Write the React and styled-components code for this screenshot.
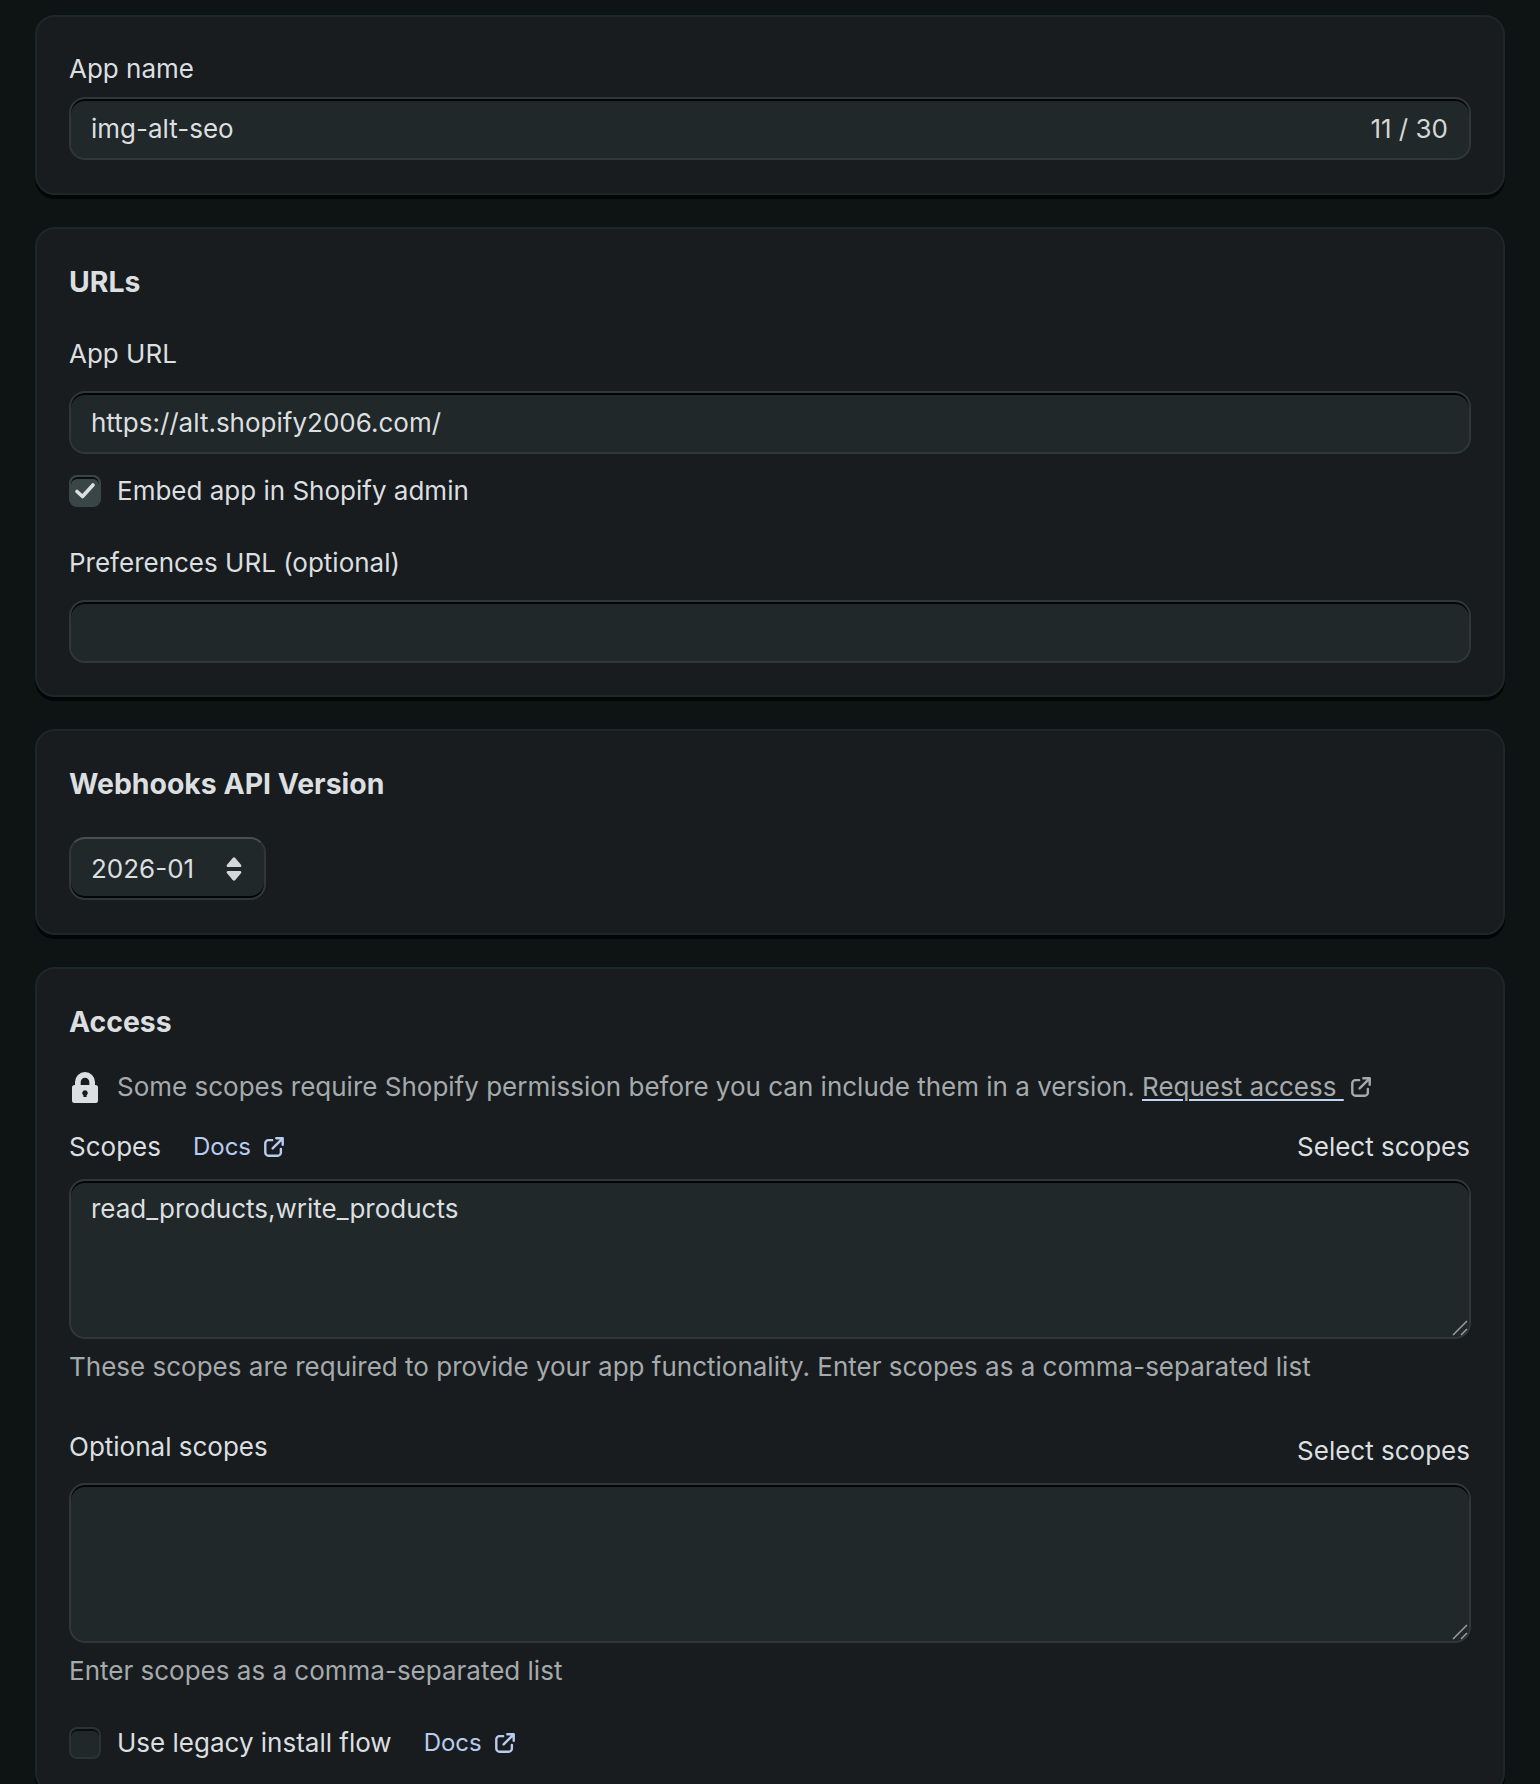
import styled, { createGlobalStyle } from "styled-components";

const GlobalStyle = createGlobalStyle`
  html, body {
    margin: 0;
    height: 1784px;
    overflow: hidden;
    background: #0e1313;
  }
  #root {
    height: 1784px;
    overflow: hidden;
  }
`;

const Page = styled.div`
  display: flex;
  flex-direction: column;
  gap: 32px;
  padding: 15px 35px 0;
  font-family: Inter, "Liberation Sans", sans-serif;
  font-size: 26px;
  line-height: 32px;
  color: #dcdfe0;
`;

const Card = styled.section`
  display: flex;
  flex-direction: column;
  padding: ${(p) => p.$pt || "33px"} 32px ${(p) => p.$pb || "32px"};
  background: #181c1f;
  border: 2px solid #1c2729;
  border-radius: 20px;
  box-shadow: 0 4px 0 #040606;
`;

const Heading = styled.h2`
  margin: 0 0 ${(p) => p.$mb || "0"};
  font-size: 28.4px;
  line-height: 40px;
  font-weight: 700;
  color: #dcdfe0;
`;

const Label = styled.label`
  display: block;
  margin-bottom: ${(p) => p.$mb || "12px"};
  line-height: 32px;
`;

const Field = styled.div`
  display: flex;
  align-items: center;
  justify-content: space-between;
  box-sizing: border-box;
  height: 63px;
  padding: 0 21px 0 20px;
  background: #212829;
  border: 2px solid #2f3739;
  border-radius: 16px;
  box-shadow: inset 0 2px 0 #040606;
`;

const Counter = styled.span`
  color: #d4d6d7;
`;

const CheckRow = styled.div`
  display: flex;
  align-items: center;
  gap: 16px;
  margin-top: ${(p) => p.$mt || "21px"};
  margin-bottom: ${(p) => p.$mb || "40px"};
`;

const CheckBox = styled.span`
  display: flex;
  align-items: center;
  justify-content: center;
  flex: none;
  box-sizing: border-box;
  width: 32px;
  height: 32px;
  border-radius: 8px;
  background: ${(p) => (p.$checked ? "#3a4547" : "#212829")};
  border: 2px solid ${(p) => (p.$checked ? "#3a4547" : "#2b3335")};
  box-shadow: inset 0 2px 0 #0a0d0e;
  color: #dcdfe0;
`;

const Select = styled.div`
  display: flex;
  align-items: center;
  justify-content: space-between;
  box-sizing: border-box;
  width: 197px;
  height: 63px;
  margin-top: 33px;
  padding: 0 22px 0 20px;
  background: #212829;
  border: 2px solid #2f3739;
  border-top-color: #465052;
  border-radius: 16px;
  box-shadow: inset 0 -2px 0 #040606;
`;

const Notice = styled.div`
  display: flex;
  align-items: center;
  gap: 16px;
  margin-top: 29px;
  color: #a5aaac;
`;

const LockBox = styled.span`
  display: flex;
  justify-content: center;
  flex: none;
  width: 32px;
`;

const NoticeLink = styled.a`
  color: #a5aaac;
  text-decoration: underline;
  text-decoration-color: #c4d4f5;
  text-underline-offset: 3px;
  text-decoration-thickness: 2px;
  white-space: pre;
`;

const NoticeIcon = styled.span`
  display: inline-flex;
  margin-left: -10px;
`;

const ScopeRow = styled.div`
  display: flex;
  align-items: ${(p) => p.$align || "center"};
  justify-content: space-between;
  margin-top: ${(p) => p.$mt || "0"};
  margin-bottom: 16px;
`;

const ScopeLabel = styled.div`
  display: flex;
  align-items: center;
  gap: 32px;
`;

const DocsLink = styled.a`
  display: inline-flex;
  align-items: center;
  gap: 12px;
  margin-left: ${(p) => p.$ml || "0"};
  font-size: 24px;
  color: #b8cbf0;
`;

const SelectScopes = styled.span`
  margin-right: 1px;
  margin-top: ${(p) => p.$mt || "0"};
`;

const TextBox = styled.div`
  position: relative;
  box-sizing: border-box;
  height: 160px;
  padding: 12px 20px;
  background: #212829;
  border: 2px solid #2f3739;
  border-radius: 16px;
  box-shadow: inset 0 2px 0 #040606;
`;

const Resize = styled.svg`
  position: absolute;
  right: 1px;
  bottom: 1px;
`;

const Help = styled.p`
  margin: 12px 0 0;
  color: #a5aaac;
`;

const ExternalIcon = () => (
  <svg width="22" height="22" viewBox="0 0 24 24" fill="none" stroke="currentColor" strokeWidth="2.6" strokeLinecap="round" strokeLinejoin="round">
    <path d="M10 4.500H6a3.500 3.500 0 0 0-3.500 3.500v10a3.500 3.500 0 0 0 3.500 3.500h10a3.500 3.500 0 0 0 3.500-3.500v-4" />
    <path d="M10.500 13.500 21.500 2.500M14.500 2.500h7v7" />
  </svg>
);

const LockIcon = () => (
  <svg width="26" height="31" viewBox="0 0 26 31">
    <path
      fill="#dcdfe0"
      fillRule="evenodd"
      d="M3 13V10a10 10 0 0 1 20 0v3h.500a2.500 2.500 0 0 1 2.500 2.500v13a2.500 2.500 0 0 1-2.500 2.500h-21A2.500 2.500 0 0 1 0 28.500v-13A2.500 2.500 0 0 1 2.500 13zM8.700 13h8.600v-3a4.300 4.300 0 0 0-8.600 0zM13 18.200a2.800 2.800 0 0 0-1.600 5.100v1.700h3.200v-1.700A2.800 2.800 0 0 0 13 18.200z"
    />
  </svg>
);

const SortIcon = () => (
  <svg width="16" height="24" viewBox="0 0 16 24" fill="#d4d7d9">
    <path d="M6.700 1.100a1.700 1.700 0 0 1 2.600 0l5.700 6.600c.8 1 .2 2.300-1.100 2.300H2.100C.8 10 .2 8.700 1 7.700z" />
    <path d="M6.700 22.900a1.700 1.700 0 0 0 2.600 0l5.700-6.600c.8-1 .2-2.300-1.100-2.300H2.100c-1.300 0-1.900 1.300-1.100 2.300z" />
  </svg>
);

const CheckIcon = () => (
  <svg width="22" height="18" viewBox="0 0 22 18" fill="none" stroke="currentColor" strokeWidth="3.600" strokeLinecap="round" strokeLinejoin="round">
    <path d="M3 9.500l5.500 5L19 3" />
  </svg>
);

const ResizeGrip = () => (
  <Resize width="16" height="16" viewBox="0 0 16 16" stroke="#9a9d9e" strokeWidth="1.500">
    <path d="M1 15 15 1M9 15l6-6" />
  </Resize>
);

const App = () => {
  return (
    <>
      <GlobalStyle />
      <Page>
        <Card $pt="36px" $pb="33px">
          <Label>App name</Label>
          <Field>
            img-alt-seo
            <Counter>11 / 30</Counter>
          </Field>
        </Card>

        <Card>
          <Heading $mb="36px">URLs</Heading>
          <Label $mb="21px">App URL</Label>
          <Field>https://alt.shopify2006.com/</Field>
          <CheckRow>
            <CheckBox $checked>
              <CheckIcon />
            </CheckBox>
            Embed app in Shopify admin
          </CheckRow>
          <Label $mb="21px">Preferences URL (optional)</Label>
          <Field />
        </Card>

        <Card $pb="33px">
          <Heading>Webhooks API Version</Heading>
          <Select>
            2026-01
            <SortIcon />
          </Select>
        </Card>

        <Card>
          <Heading>Access</Heading>
          <Notice>
            <LockBox>
              <LockIcon />
            </LockBox>
            <span>
              Some scopes require Shopify permission before you can include them in a version.{" "}
              <NoticeLink>Request access </NoticeLink>
            </span>
            <NoticeIcon>
              <ExternalIcon />
            </NoticeIcon>
          </Notice>
          <ScopeRow $mt="28px">
            <ScopeLabel>
              Scopes
              <DocsLink>
                Docs
                <ExternalIcon />
              </DocsLink>
            </ScopeLabel>
            <SelectScopes>Select scopes</SelectScopes>
          </ScopeRow>
          <TextBox>
            read_products,write_products
            <ResizeGrip />
          </TextBox>
          <Help>These scopes are required to provide your app functionality. Enter scopes as a comma-separated list</Help>
          <ScopeRow $mt="48px" $align="flex-start">
            <span>Optional scopes</span>
            <SelectScopes $mt="4px">Select scopes</SelectScopes>
          </ScopeRow>
          <TextBox>
            <ResizeGrip />
          </TextBox>
          <Help>Enter scopes as a comma-separated list</Help>
          <CheckRow $mt="40px" $mb="0">
            <CheckBox />
            Use legacy install flow
            <DocsLink $ml="16px">
              Docs
              <ExternalIcon />
            </DocsLink>
          </CheckRow>
        </Card>
      </Page>
    </>
  );
};

export default App;
